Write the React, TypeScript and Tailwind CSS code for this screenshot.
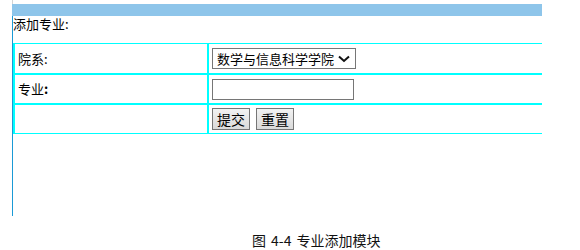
export default function App() {
  const font = { fontFamily: '"Noto Sans CJK SC", "Liberation Sans", sans-serif' };
  return (
    <div className="w-[580px] h-[250px] bg-white text-black overflow-hidden" style={font}>
      <div className="ml-[12px] w-[530px] h-[216px] flex flex-col">
        <div className="h-[4px] border-l border-[#d4d4d4]" />
        <div className="h-[12px] bg-[#8ec5ea]" />
        <div className="flex-1 border-l border-[#1a9ad6] flex flex-col">
          <div className="h-[27px] text-[13px] leading-[15px]">添加专业:</div>
          <div className="border-t border-l-2 border-[#00ffff] flex flex-col text-[13px]">
            <div className="flex h-[31px] border-b-2 border-[#00ffff]">
              <div className="w-[194px] border-r-2 border-[#00ffff] pl-[3px] flex items-center">院系:</div>
              <div className="flex-1 pl-[3px] flex items-center">
                <div className="w-[144px] h-[21px] border border-[#767676] flex items-center justify-between pl-[4px] pr-[5px] leading-[19px] whitespace-nowrap">
                  <span>数学与信息科学学院</span>
                  <svg width="12" height="8" viewBox="0 0 12 8" className="shrink-0">
                    <path d="M1 1.5 L6 6 L11 1.5" fill="none" stroke="#111" strokeWidth="2" />
                  </svg>
                </div>
              </div>
            </div>
            <div className="flex h-[30px] border-b-2 border-[#00ffff]">
              <div className="w-[194px] border-r-2 border-[#00ffff] pl-[3px] flex items-center">专业<span className="font-bold">:</span></div>
              <div className="flex-1 pl-[3px] flex items-center">
                <div className="w-[142px] h-[21px] border border-[#767676] bg-white" />
              </div>
            </div>
            <div className="flex h-[29px] border-b border-[#00ffff]">
              <div className="w-[194px] border-r-2 border-[#00ffff]" />
              <div className="flex-1 pl-[3px] flex items-center gap-[6px]">
                <div className="w-[38px] h-[22px] border border-[#767676] bg-gradient-to-b from-[#f2f2f2] to-[#dadada] flex items-center justify-center leading-[20px] text-[14px]">提交</div>
                <div className="w-[38px] h-[22px] border border-[#767676] bg-gradient-to-b from-[#f2f2f2] to-[#dadada] flex items-center justify-center leading-[20px] text-[14px]">重置</div>
              </div>
            </div>
          </div>
        </div>
      </div>
      <div className="pl-[252px] pt-[16px] text-[14px] leading-[16px] text-[#111] flex gap-[5px]">
        <span>图</span>
        <span>4-4</span>
        <span>专业添加模块</span>
      </div>
    </div>
  );
}
